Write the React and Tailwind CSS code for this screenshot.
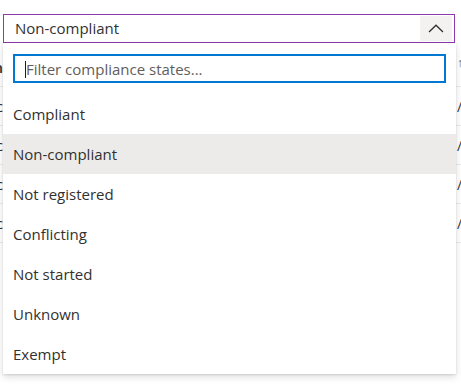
import React, { useState } from 'react';

const states = ['Compliant', 'Non-compliant', 'Not registered', 'Conflicting', 'Not started', 'Unknown', 'Exempt'];

// Rows of the device list behind the open dropdown
const rows = [
  { name: 'Windows 10 compliance policy', date: '1/12/2024, 9:41 AM' },
  { name: 'iOS baseline policy', date: '1/10/2024, 3:12 PM' },
  { name: 'Android Enterprise policy', date: '1/08/2024, 11:05 AM' },
  { name: 'macOS compliance policy', date: '1/05/2024, 4:27 PM' },
];

function ChevronUp() {
  return (
    <svg width="16" height="9" viewBox="0 0 16 9" fill="none">
      <polyline points="1,8 8,1.2 15,8" stroke="#323130" strokeWidth="1.3" />
    </svg>
  );
}

function App() {
  const [selected] = useState('Non-compliant');
  const [filter, setFilter] = useState('');

  return (
    <div className="relative w-[461px] h-[389px] overflow-hidden bg-white text-[#323130] font-['Open_Sans',sans-serif]">
      {/* Dropdown field */}
      <div className="ml-[3px] mt-[14px] w-[452px] h-[29px] border border-[#8a3aaa] flex items-center pl-[11px] pr-[2px]">
        <span className="flex-1 text-[15px] leading-none">{selected}</span>
        <div className="w-[32px] h-[25px] bg-[#f3f2f1] flex items-center justify-center">
          <ChevronUp />
        </div>
      </div>

      {/* Table behind */}
      <div className="mt-[5px]">
        <div className="h-[39px] flex items-center border-b border-[#edebe9]">
          <div className="w-[3px] overflow-hidden flex justify-end">
            <span className="text-[15px] font-semibold whitespace-nowrap">Column</span>
          </div>
          <div className="flex-1" />
          <div className="w-[4px] overflow-hidden text-[12px] text-[#605e5c] whitespace-nowrap mb-[8px]">↑ Last</div>
        </div>
        {rows.map((r) => (
          <div key={r.name} className="h-[39px] flex items-center border-b border-[#edebe9]">
            <div className="w-[3px] overflow-hidden flex justify-end">
              <span className="text-[14px] whitespace-nowrap">{r.name}c</span>
            </div>
            <div className="flex-1" />
            <div className="w-[4px] overflow-hidden text-[14px] whitespace-nowrap">/{r.date}</div>
          </div>
        ))}
      </div>

      {/* Callout list */}
      <div className="absolute left-[3px] top-[43px] w-[453px] bg-white shadow-[0_3.2px_7.2px_0_rgba(0,0,0,0.132),0_0.6px_1.8px_0_rgba(0,0,0,0.108)]">
        <div className="px-[10px] pt-[11px] pb-[11px]">
          <div className="relative h-[29px] border-2 border-[#0078d4] flex items-center pl-[11px]">
            <input
              className="w-full outline-none text-[15px] leading-none bg-transparent caret-transparent placeholder:text-[#605e5c]"
              placeholder="Filter compliance states..."
              value={filter}
              onChange={(e) => setFilter(e.target.value)}
            />
            <span className="absolute left-[10px] top-[5px] w-px h-[17px] bg-[#201f1e]" />
          </div>
        </div>
        {states.map((s) => (
          <div
            key={s}
            className={`h-[40px] flex items-center pl-[10px] text-[15px] ${s === selected ? 'bg-[#edebe9]' : ''}`}
          >
            {s}
          </div>
        ))}
      </div>
    </div>
  );
}

export default App;
